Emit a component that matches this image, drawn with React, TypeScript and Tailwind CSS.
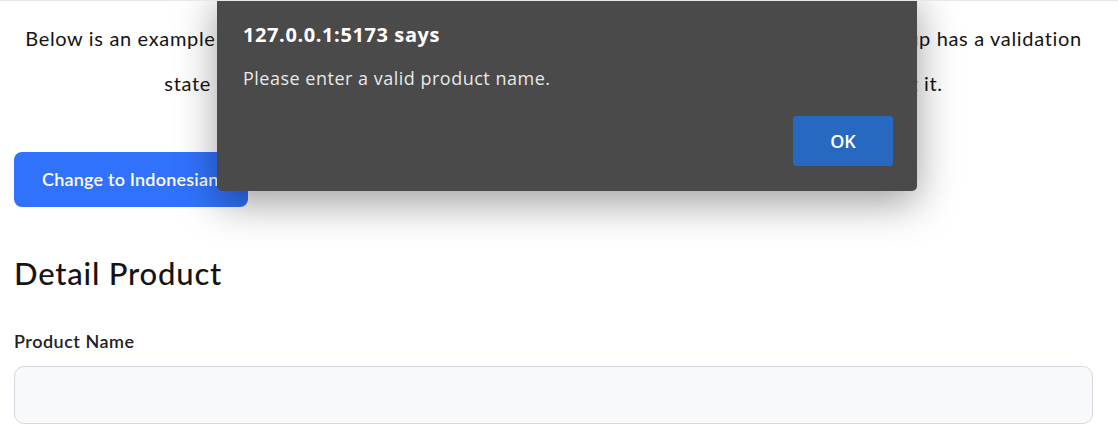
import React from "react";

export default function App() {
  return (
    <div className="relative w-[1118px] h-[440px] overflow-hidden bg-white border-t border-[#e8e8e8] text-[#141414]" style={{ fontFamily: "Lato, 'Noto Sans', sans-serif" }}>
      <div className="pl-[14px] pr-[25px] pt-[15px]">
        <p className="text-center text-[20px] tracking-[0.66px] leading-[45px]">
          Below is an example form built entirely with Bootstrap’s form controls. Each required form group has a validation
          <br />
          state that can be triggered by attempting to submit the form without completing it.
        </p>
        <button className="mt-[46px] h-[55px] w-[234px] rounded-[8px] bg-[#3172fd] text-white text-[18px] tracking-[0.2px] font-semibold text-left pl-[28px] whitespace-nowrap overflow-hidden">
          Change to Indonesian
        </button>
        <h2 className="mt-[46px] text-[31px] tracking-[0.8px] font-medium leading-[40px]">Detail Product</h2>
        <label className="block mt-[36px] text-[18px] tracking-[0.5px] font-semibold leading-[24px] text-[#222]">Product Name</label>
        <div className="mt-[13px] h-[58px] rounded-[10px] border border-[#d6d9e0] bg-[#f8f9fb]" />
      </div>

      <div
        className="absolute left-[217px] top-[-10px] w-[700px] h-[200px] bg-[#4a4a4a] rounded-b-[5px] shadow-[0_12px_40px_rgba(0,0,0,0.38)] flex flex-col pl-[26px] pr-[24px] pt-[31px]"
        style={{ fontFamily: "'Open Sans', 'Noto Sans', sans-serif" }}
      >
        <div className="text-white text-[20px] tracking-[0.6px] font-bold leading-[26px]">127.0.0.1:5173 says</div>
        <div className="mt-[19px] text-[#e8e8e8] text-[18px] tracking-[0.5px] leading-[22px]">Please enter a valid product name.</div>
        <div className="flex justify-end mt-[27px]">
          <button className="w-[100px] h-[50px] rounded-[3px] bg-[#2769c1] text-white text-[18px] font-semibold">OK</button>
        </div>
      </div>
    </div>
  );
}
